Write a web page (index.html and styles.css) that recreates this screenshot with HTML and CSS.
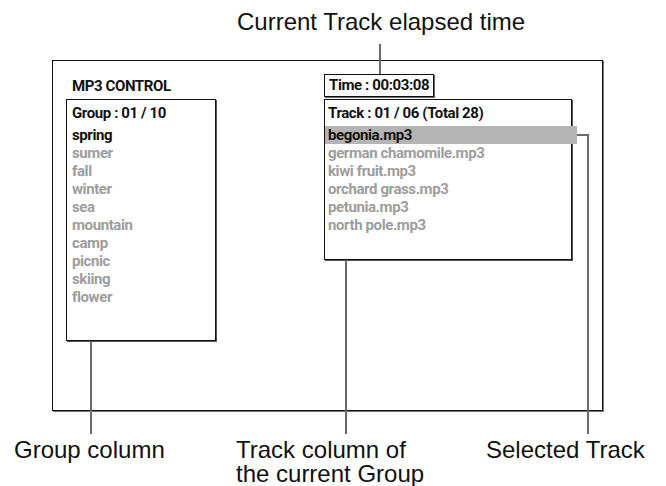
FILE: index.html
```html
<!DOCTYPE html>
<html lang="en">
<head>
  <meta charset="UTF-8" />
  <title>MP3 Control</title>
  <link rel="stylesheet" href="styles.css">
</head>
<body>

  <div id="figure">
    <div class="caption-top">Current Track elapsed time</div>

    <div id="screen">
      <div class="panel-title">MP3 CONTROL</div>
      <div class="time-box">Time : 00:03:08</div>

      <div class="list-box group-box">
        <div class="list-head">Group : 01 / 10</div>
        <ul class="items">
          <li class="current">spring</li>
          <li>sumer</li>
          <li>fall</li>
          <li>winter</li>
          <li>sea</li>
          <li>mountain</li>
          <li>camp</li>
          <li>picnic</li>
          <li>skiing</li>
          <li>flower</li>
        </ul>
      </div>

      <div class="list-box track-box">
        <div class="list-head">Track : 01 / 06 (Total 28)</div>
        <ul class="items">
          <li class="current selected">begonia.mp3</li>
          <li>german chamomile.mp3</li>
          <li>kiwi fruit.mp3</li>
          <li>orchard grass.mp3</li>
          <li>petunia.mp3</li>
          <li>north pole.mp3</li>
        </ul>
      </div>
    </div>

    <div id="captions">
      <div class="caption">Group column</div>
      <div class="caption">Track column of<br>the current Group</div>
      <div class="caption">Selected Track</div>
    </div>

    <!-- leader lines -->
    <div class="lead lead-time"></div>
    <div class="lead lead-group"></div>
    <div class="lead lead-track"></div>
    <div class="lead lead-sel-h"></div>
    <div class="lead lead-sel-v"></div>
  </div>

</body>
</html>
```

FILE: styles.css
```css
body {
  margin: 0;
  background: #fff;
  color: #111;
  font-family: "Liberation Sans", Arial, sans-serif;
}

#figure {
  position: relative;
  width: 666px;
  height: 486px;
  overflow: hidden;
}

.caption-top {
  padding: 10px 0 0 237px;
  font-size: 24px;
  line-height: 24px;
}

#screen {
  box-sizing: border-box;
  width: 551px;
  height: 351px;
  margin: 26px 0 0 52px;
  padding: 13px 0 0 13px;
  border: 1px solid #111;
  box-shadow: 1px 1px 0 #777;
  display: grid;
  grid-template-columns: 150px 248px;
  grid-template-rows: 23px auto;
  column-gap: 108px;
  row-gap: 2px;
  align-items: start;
  font-family: Roboto, "Liberation Sans", sans-serif;
  font-weight: bold;
  font-size: 15px;
  letter-spacing: -0.4px;
}

.panel-title {
  align-self: center;
  padding-left: 6px;
  line-height: 20px;
}

.time-box {
  justify-self: start;
  box-sizing: border-box;
  width: 110px;
  height: 23px;
  padding: 0 4px;
  line-height: 21px;
  white-space: nowrap;
  border: 1px solid #111;
  box-shadow: 1px 1px 0 #666;
}

.list-box {
  box-sizing: border-box;
  border: 1px solid #111;
  box-shadow: 1px 1px 0 #555;
}

.group-box {
  height: 242px;
  padding-left: 5px;
}

.track-box {
  height: 161px;
}

.track-box .list-head,
.track-box .items li {
  padding-left: 3px;
}

.list-head {
  height: 26px;
  line-height: 26px;
  white-space: nowrap;
}

.items {
  list-style: none;
  margin: 0;
  padding: 0;
}

.items li {
  height: 18px;
  line-height: 18px;
  color: #9d9d9d;
  white-space: nowrap;
}

.items li.current {
  color: #111;
}

.items li.selected {
  background: #b4b4b4;
  margin-right: -6px;
}

#captions {
  display: grid;
  grid-template-columns: 222px 250px auto;
  margin-top: 27px;
  padding-left: 14px;
  font-size: 24px;
  line-height: 24px;
}

.lead {
  position: absolute;
  background: #6b6b6b;
}

.lead-time {
  left: 379px;
  top: 44px;
  width: 2px;
  height: 30px;
}

.lead-group {
  left: 90px;
  top: 341px;
  width: 2px;
  height: 93px;
}

.lead-track {
  left: 345px;
  top: 260px;
  width: 2px;
  height: 174px;
}

.lead-sel-h {
  left: 577px;
  top: 134px;
  width: 12px;
  height: 2px;
}

.lead-sel-v {
  left: 587px;
  top: 134px;
  width: 2px;
  height: 300px;
}
```
